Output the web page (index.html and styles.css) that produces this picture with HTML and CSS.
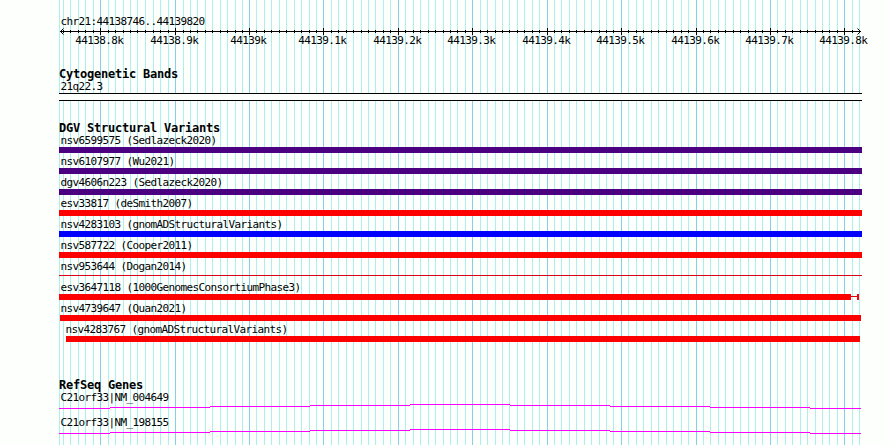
FILE: index.html
```
<!DOCTYPE html>
<html lang="en">
<head>
    <meta charset="UTF-8">
    <title>chr21:44138746..44139820</title>
    <link rel="stylesheet" href="styles.css">
</head>
<body>
    <div class="panel">
        <svg class="gridlines" width="890" height="445" shape-rendering="crispEdges">
            <path id="grid-minor" class="grid-minor"/>
            <path id="grid-major" class="grid-major"/>
        </svg>

        <div class="label">chr21:44138746..44139820</div>
        <svg class="ruler" width="831" height="39" viewBox="59 28 831 39">
            <g shape-rendering="crispEdges">
                <path class="axis" d="M60 31.5H861"/>
                <path id="ticks" class="axis"/>
            </g>
            <path class="arrow" d="M63.5 28.5L60.5 31.5L63.5 34.5M857.5 28.5L860.5 31.5L857.5 34.5"/>
            <g id="scale" class="scale"></g>
        </svg>

        <section class="cytobands">
            <h2>Cytogenetic Bands</h2>
            <div class="label">21q22.3</div>
            <div class="band"></div>
        </section>

        <section class="variants">
            <h2>DGV Structural Variants</h2>
            <div class="variant"><div class="label">nsv6599575 (Sedlazeck2020)</div><div class="bar indigo"></div></div>
            <div class="variant"><div class="label">nsv6107977 (Wu2021)</div><div class="bar indigo"></div></div>
            <div class="variant"><div class="label">dgv4606n223 (Sedlazeck2020)</div><div class="bar indigo"></div></div>
            <div class="variant"><div class="label">esv33817 (deSmith2007)</div><div class="bar red"></div></div>
            <div class="variant"><div class="label">nsv4283103 (gnomADStructuralVariants)</div><div class="bar blue"></div></div>
            <div class="variant"><div class="label">nsv587722 (Cooper2011)</div><div class="bar red"></div></div>
            <div class="variant"><div class="label">nsv953644 (Dogan2014)</div><div class="bar thin"></div></div>
            <div class="variant">
                <div class="label">esv3647118 (1000GenomesConsortiumPhase3)</div>
                <div class="bar split"><span class="block"></span><span class="link"></span><span class="end"></span></div>
            </div>
            <div class="variant inset"><div class="label">nsv4739647 (Quan2021)</div><div class="bar red"></div></div>
            <div class="variant short"><div class="label">nsv4283767 (gnomADStructuralVariants)</div><div class="bar red"></div></div>
        </section>

        <section class="genes">
            <h2>RefSeq Genes</h2>
            <div class="gene">
                <div class="label">C21orf33|NM_004649</div>
                <svg width="803" height="5" viewBox="59 0 803 5" shape-rendering="crispEdges">
                    <path class="intron" d="M59 4.5H110M110 3.5H210M210 2.5H310M310 1.5H410M410 .5H510M510 1.5H610M610 2.5H710M710 3.5H810M810 4.5H861"/>
                </svg>
            </div>
            <div class="gene">
                <div class="label">C21orf33|NM_198155</div>
                <svg width="803" height="5" viewBox="59 0 803 5" shape-rendering="crispEdges">
                    <path class="intron" d="M59 4.5H110M110 3.5H210M210 2.5H310M310 1.5H410M410 .5H510M510 1.5H610M610 2.5H710M710 3.5H810M810 4.5H861"/>
                </svg>
            </div>
        </section>
    </div>

    <script>
        // one line every 10 bases
        const lines = [
            63, 70, 78, 85, 93, 100, 108, 115, 123, 130, 137, 145, 153, 160, 168,
            175, 183, 190, 197, 205, 212, 220, 227, 235, 242,
            249, 256, 264, 271, 279, 286, 294, 301, 309, 316,
            323, 331, 338, 346, 353, 361, 368, 375, 383, 390,
            398, 405, 413, 420, 428, 435, 443, 450, 457, 465,
            472, 480, 487, 495, 502, 509, 517, 524, 532, 539,
            547, 554, 561, 569, 576, 584, 591, 599, 606, 613,
            621, 628, 636, 643, 651, 658, 666, 673, 681, 688,
            696, 703, 710, 718, 725, 733, 740, 748, 755, 762,
            770, 777, 785, 792, 800, 807, 815, 822, 829, 837,
            844, 852, 859
        ];
        let minor = "M59.5 0V445", major = "", ticks = "", labels = "";

        lines.forEach((x, i) => {
            const c = x + 0.5;
            if (i % 10 === 5) {
                const kb = (441388 + (i - 5) / 10) / 10;
                major += `M${c} 0V445`;
                ticks += `M${c} 28V35`;
                labels += `<text x="${x - 0.7}" y="44">${kb}k</text>`;
            } else {
                minor += `M${c} 0V445`;
                ticks += `M${c} 30V33`;
            }
        });

        document.getElementById("grid-minor").setAttribute("d", minor);
        document.getElementById("grid-major").setAttribute("d", major);
        document.getElementById("ticks").setAttribute("d", ticks);
        document.getElementById("scale").innerHTML = labels;
    </script>
</body>
</html>
```
FILE: styles.css
```
body {
    margin: 0;
    background: #fdfffc;
    color: black;
    font-family: "DejaVu Sans Mono", monospace;
}
.panel {
    position: relative;
    box-sizing: border-box;
    width: 890px;
    height: 445px;
    padding: 15px 0 0 59px;
    overflow: hidden;
}
svg {
    display: block;
    fill: none;
}
.gridlines {
    position: absolute;
    top: 0;
    left: 0;
    z-index: -1;
}
.grid-minor {
    stroke: #afeeee;
}
.grid-major {
    stroke: #87ceeb;
}
.axis, .arrow {
    stroke: black;
}
.label {
    height: 13px;
    padding-left: 1.5px;
    font-size: 11px;
    line-height: 13px;
    letter-spacing: -0.622px;
    white-space: pre;
}
.scale {
    fill: black;
    font-size: 11px;
    letter-spacing: -0.622px;
    text-anchor: middle;
}
h2 {
    height: 13px;
    margin: 0;
    font-size: 12px;
    line-height: 14px;
    letter-spacing: -0.224px;
    white-space: pre;
}
section {
    width: 803px;
}
.band {
    height: 6px;
    background: #fdfffc;
    border-top: 1px solid black;
    border-bottom: 1px solid black;
}
.variants {
    margin-top: 20px;
}
.variant {
    height: 21px;
}
.bar {
    height: 6px;
}
.indigo {
    background: #4b0082;
}
.red {
    background: red;
}
.blue {
    background: blue;
}
.thin {
    height: 1px;
    margin-top: 2px;
    background: #dc0014;
}
.split {
    display: flex;
    align-items: flex-start;
}
.block {
    width: 792px;
    height: 6px;
    background: red;
}
.link {
    width: 6px;
    height: 1px;
    margin-top: 2px;
    background: #dc0014;
}
.end {
    width: 2px;
    height: 6px;
    background: red;
}
.inset .bar {
    margin: 0 1px;
}
.short {
    padding: 0 2px 0 7px;
}
.short .label {
    padding-left: 0;
    margin-left: -0.5px;
}
.genes {
    margin-top: 34px;
}
.gene {
    height: 25px;
}
.intron {
    stroke: magenta;
}
```
